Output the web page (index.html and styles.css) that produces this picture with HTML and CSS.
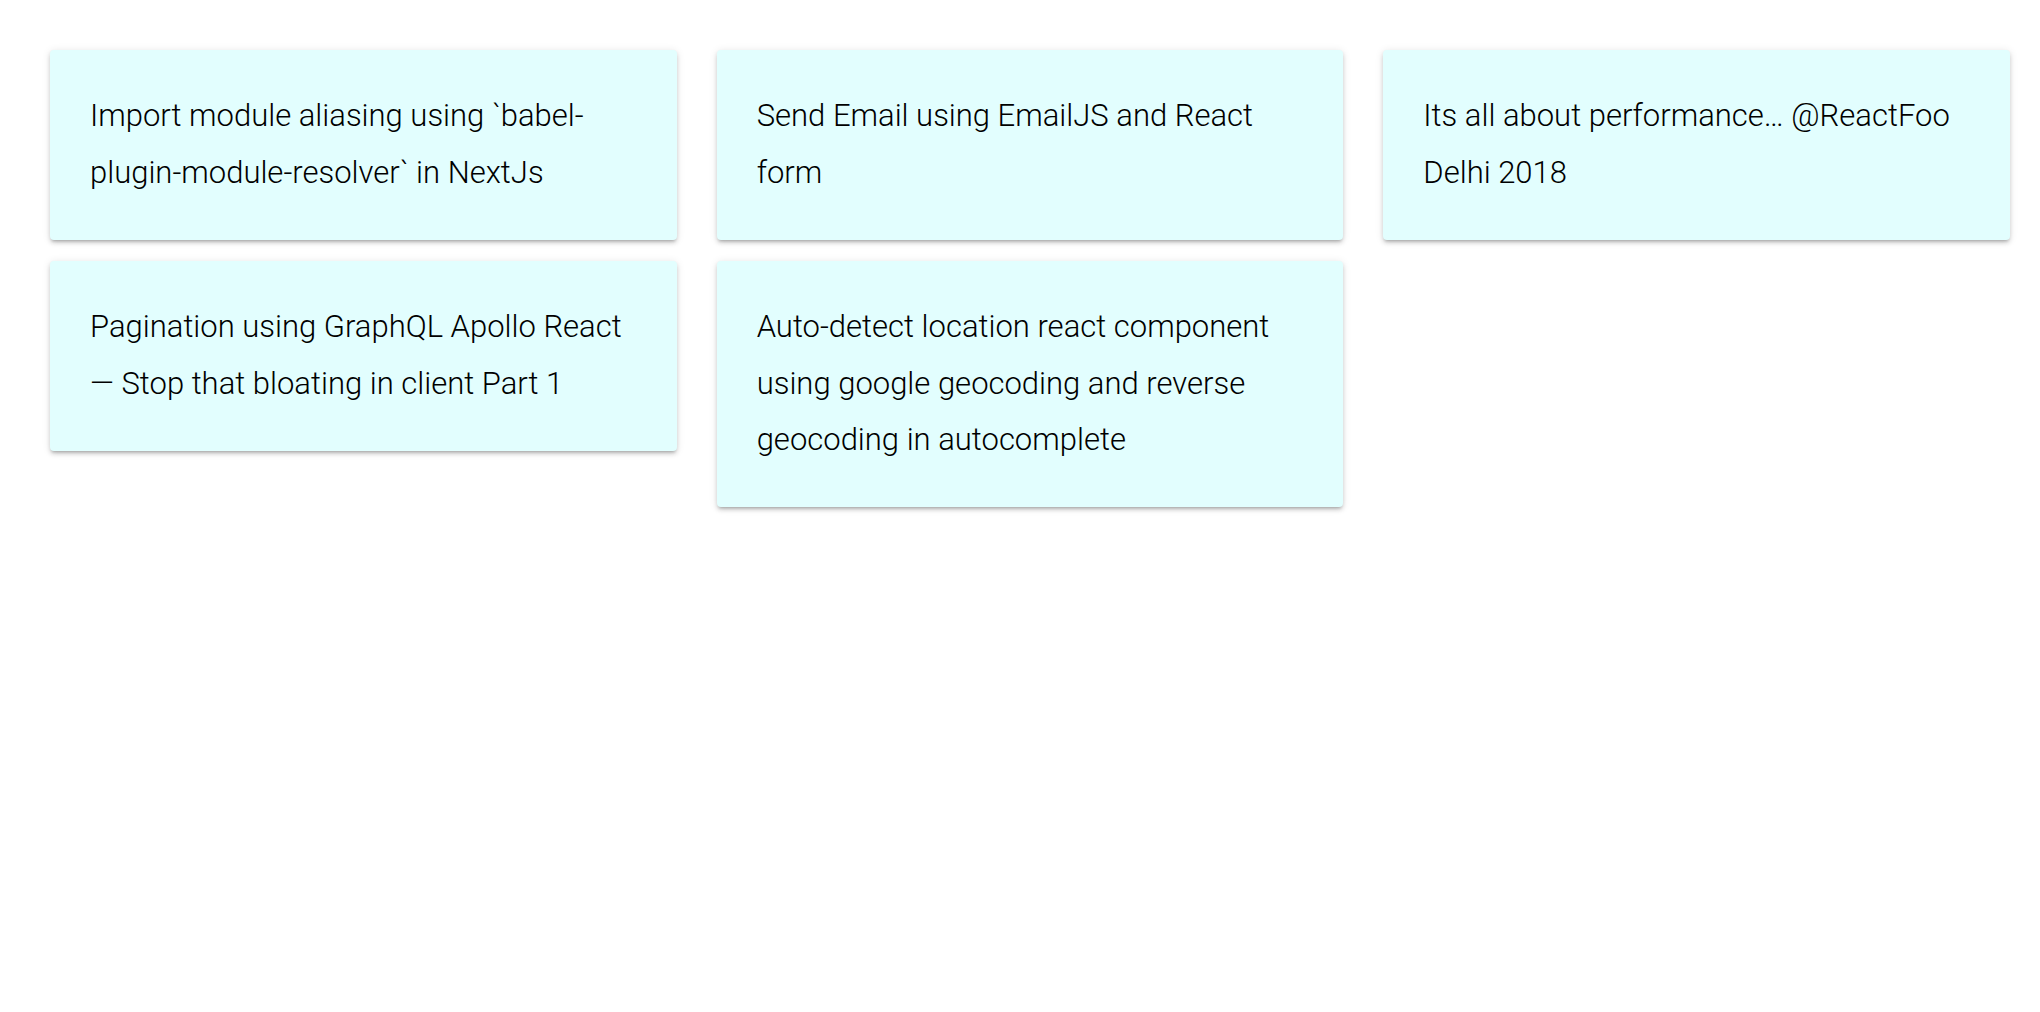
FILE: index.html
```html
<!DOCTYPE html>
<html lang="en">
<head>
<meta charset="utf-8">
<title>Posts</title>
<link rel="stylesheet" href="styles.css">
</head>
<body>
<main class="grid">
  <article class="card"><p class="card-title">Import module aliasing using `babel-plugin-module-resolver` in NextJs</p></article>
  <article class="card"><p class="card-title">Send Email using EmailJS and React form</p></article>
  <article class="card"><p class="card-title">Its all about performance… @ReactFoo Delhi 2018</p></article>
  <article class="card"><p class="card-title">Pagination using GraphQL Apollo React — Stop that bloating in client Part 1</p></article>
  <article class="card"><p class="card-title">Auto-detect location react component using google geocoding and reverse geocoding in autocomplete</p></article>
</main>
</body>
</html>
```
FILE: styles.css
```css
html, body {
  margin: 0;
  padding: 0;
  background: #ffffff;
}
body {
  font-family: Roboto, "Liberation Sans", Arial, sans-serif;
  color: #000000;
  min-height: 100vh;
}
.grid {
  display: grid;
  grid-template-columns: repeat(3, 1fr);
  column-gap: 40px;
  row-gap: 21px;
  align-items: start;
  padding: 49.5px 30px 40px 50px;
}
.card {
  background: #e2fefe;
  border-radius: 4px;
  box-shadow: 0 3px 3px -2px rgba(0, 0, 0, 0.2), 0 3px 4px 0 rgba(0, 0, 0, 0.14), 0 1px 8px 0 rgba(0, 0, 0, 0.1);
  padding: 38.5px 40px;
}
.card-title {
  margin: 0;
  font-size: 31px;
  font-weight: 300;
  line-height: 56.5px;
  color: #000000;
}
```
